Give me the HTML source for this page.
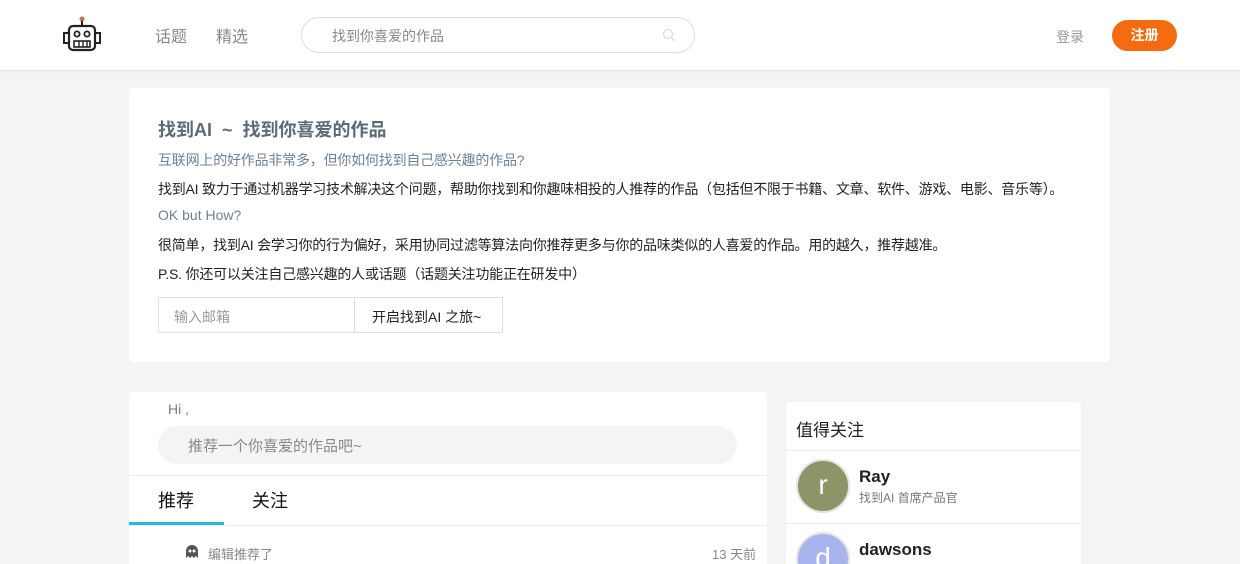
<!DOCTYPE html>
<html><head><meta charset="utf-8"><style>
*{margin:0;padding:0;box-sizing:border-box}
html{width:1240px;height:564px;overflow:hidden}
body{width:1240px;height:564px;overflow:hidden;background:#f4f4f4;font-family:"Liberation Sans","Noto Sans CJK SC",sans-serif;position:relative}
.hdr{position:absolute;left:0;top:0;width:1240px;height:70px;background:#fff;box-shadow:0 1px 3px rgba(0,0,0,.08)}
.abs{position:absolute}
.card{position:absolute;background:#fff;border-radius:4px;overflow:hidden}
</style></head><body>
<div class="hdr">
 <svg class="abs" style="left:62px;top:15px" width="40" height="38" viewBox="0 0 40 38">
  <circle cx="20" cy="4" r="2.5" fill="#c8733a"/><line x1="20" y1="6" x2="20" y2="11" stroke="#222" stroke-width="2"/>
  <rect x="7" y="11" width="26" height="24" rx="4" fill="none" stroke="#222" stroke-width="2.2"/>
  <rect x="2" y="18" width="5" height="10" fill="none" stroke="#222" stroke-width="2"/><rect x="33" y="18" width="5" height="10" fill="none" stroke="#222" stroke-width="2"/>
  <circle cx="15" cy="19" r="2.6" fill="none" stroke="#222" stroke-width="1.8"/><circle cx="25" cy="19" r="2.6" fill="none" stroke="#222" stroke-width="1.8"/>
  <rect x="12" y="26" width="16" height="6" fill="none" stroke="#222" stroke-width="1.6"/><line x1="17" y1="26" x2="17" y2="32" stroke="#222" stroke-width="1.4"/><line x1="21" y1="26" x2="21" y2="32" stroke="#222" stroke-width="1.4"/><line x1="25" y1="26" x2="25" y2="32" stroke="#222" stroke-width="1.4"/>
 </svg>
 <div class="abs" style="left:155px;top:23px;font-size:16px;color:#888">话题</div>
 <div class="abs" style="left:216px;top:23px;font-size:16px;color:#888">精选</div>
 <div class="abs" style="left:301px;top:17px;width:394px;height:36px;border:1px solid #ddd;border-radius:18px"></div>
 <div class="abs" style="left:332px;top:26px;font-size:14px;color:#888">找到你喜爱的作品</div>
 <svg class="abs" style="left:662px;top:28px" width="14" height="14"><circle cx="6" cy="6" r="4.5" fill="none" stroke="#ddd" stroke-width="1.3"/><line x1="9.5" y1="9.5" x2="13" y2="13" stroke="#ddd" stroke-width="1.3"/></svg>
 <div class="abs" style="left:1056px;top:27px;font-size:14px;color:#999">登录</div>
 <div class="abs" style="left:1112px;top:20px;width:65px;height:31px;border-radius:16px;background:#f56b0f;color:#fff;font-size:14px;font-weight:bold;text-align:center;line-height:31px">注册</div>
</div>
<div class="card" style="left:129px;top:88px;width:981px;height:274px">
 <div class="abs" style="left:29px;top:28px;font-size:18px;font-weight:bold;color:#5e6a73">找到AI &nbsp;~ &nbsp;找到你喜爱的作品</div>
 <div class="abs" style="left:29px;top:62px;font-size:14px;color:#6e8096;letter-spacing:-0.2px">互联网上的好作品非常多，但你如何找到自己感兴趣的作品?</div>
 <div class="abs" style="left:29px;top:91px;font-size:14px;color:#222;letter-spacing:-0.22px">找到AI 致力于通过机器学习技术解决这个问题，帮助你找到和你趣味相投的人推荐的作品（包括但不限于书籍、文章、软件、游戏、电影、音乐等）。</div>
 <div class="abs" style="left:29px;top:119px;font-size:14px;color:#6e8096">OK but How?</div>
 <div class="abs" style="left:29px;top:147px;font-size:14px;color:#222;letter-spacing:-0.22px">很简单，找到AI 会学习你的行为偏好，采用协同过滤等算法向你推荐更多与你的品味类似的人喜爱的作品。用的越久，推荐越准。</div>
 <div class="abs" style="left:29px;top:176px;font-size:14px;color:#222;letter-spacing:-0.2px">P.S. 你还可以关注自己感兴趣的人或话题（话题关注功能正在研发中）</div>
 <div class="abs" style="left:29px;top:209px;width:197px;height:36px;border:1px solid #e3e3e3;font-size:14px;color:#999;padding:9px 15px">输入邮箱</div>
 <div class="abs" style="left:225px;top:209px;width:149px;height:36px;border:1px solid #ddd;font-size:14px;color:#222;padding:9px 17px">开启找到AI 之旅~</div>
</div>
<div class="card" style="left:129px;top:392px;width:638px;height:180px">
 <div class="abs" style="left:39px;top:9px;font-size:14px;color:#6e8096">Hi ,</div>
 <div class="abs" style="left:29px;top:34px;width:579px;height:38px;border-radius:19px;background:#f4f4f4;font-size:15px;color:#888;padding:9px 30px">推荐一个你喜爱的作品吧~</div>
 <div class="abs" style="left:0;top:83px;width:638px;height:1px;background:#eee"></div>
 <div class="abs" style="left:29px;top:95px;font-size:18px;color:#111">推荐</div>
 <div class="abs" style="left:123px;top:95px;font-size:18px;color:#111">关注</div>
 <div class="abs" style="left:0;top:130px;width:95px;height:3px;background:#29b6e8"></div>
 <div class="abs" style="left:0;top:133px;width:638px;height:1px;background:#eee"></div>
 <svg class="abs" style="left:56px;top:153px" width="14" height="14"><path d="M1 13V6a6 6 0 0 1 12 0v7l-2-2-2 2-2-2-2 2-2-2z" fill="#555"/><circle cx="5" cy="6" r="1.5" fill="#fff"/><circle cx="9" cy="6" r="1.5" fill="#fff"/></svg>
 <div class="abs" style="left:79px;top:152px;font-size:13px;color:#888">编辑推荐了</div>
 <div class="abs" style="left:583px;top:152px;font-size:13px;color:#888">13 天前</div>
</div>
<div class="card" style="left:786px;top:402px;width:295px;height:170px">
 <div class="abs" style="left:10px;top:14px;font-size:17px;color:#222">值得关注</div>
 <div class="abs" style="left:0;top:48px;width:295px;height:1px;background:#eee"></div>
 <div class="abs" style="left:10px;top:57px;width:54px;height:54px;border-radius:50%;background:#8d9468;border:2px solid #e4e4e0;color:#fff;font-size:28px;text-align:center;line-height:48px">r</div>
 <div class="abs" style="left:73px;top:65px;font-size:17px;font-weight:bold;color:#222">Ray</div>
 <div class="abs" style="left:73px;top:87px;font-size:12px;color:#777">找到AI 首席产品官</div>
 <div class="abs" style="left:0;top:121px;width:295px;height:1px;background:#eee"></div>
 <div class="abs" style="left:10px;top:130px;width:54px;height:54px;border-radius:50%;background:#a7b4ee;border:2px solid #e4e4e0;color:#fff;font-size:28px;text-align:center;line-height:48px">d</div>
 <div class="abs" style="left:73px;top:138px;font-size:17px;font-weight:bold;color:#222">dawsons</div>
</div>
</body></html>
